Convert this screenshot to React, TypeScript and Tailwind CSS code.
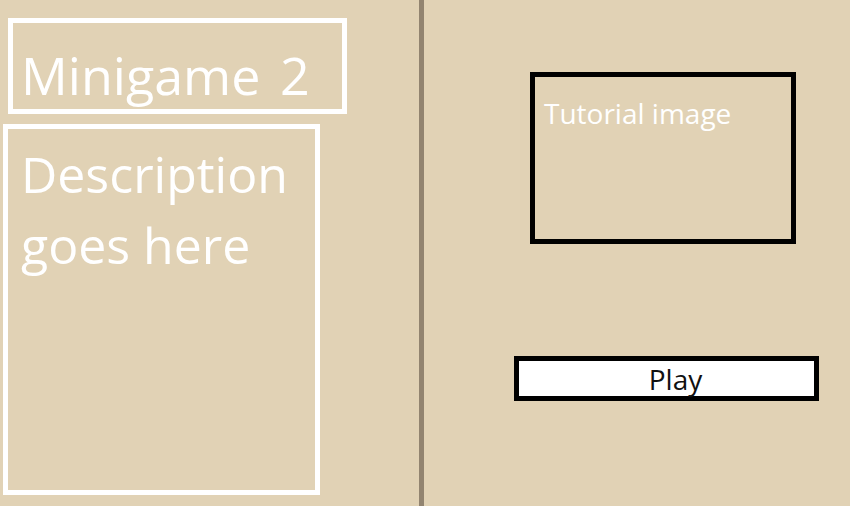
export default function App() {
  return (
    <div
      className="w-[850px] h-[506px] bg-[#e1d2b5] flex overflow-hidden text-white"
      style={{ fontFamily: '"Open Sans", "Noto Sans", sans-serif' }}
    >
      <div className="w-[419px] shrink-0 flex flex-col">
        <div className="ml-[8px] mt-[18px] w-[339px] h-[96px] border-[5px] border-white pl-[8px] pt-[26px] text-[52px] leading-none whitespace-nowrap">
          Minigame <span className="ml-[6px]">2</span>
        </div>
        <div className="ml-[3px] mt-[10px] w-[317px] h-[371px] border-[5px] border-white pl-[13px] pt-[10px] text-[50px] leading-[71px]">
          Description goes here
        </div>
      </div>
      <div className="w-[5px] shrink-0 bg-[#928470]" />
      <div className="flex-1 flex flex-col items-start">
        <div className="ml-[106px] mt-[72px] w-[266px] h-[172px] border-[5px] border-black pl-[9px] pt-[22px] text-[28px] leading-none">
          Tutorial image
        </div>
        <button className="ml-[90px] mt-[112px] w-[305px] h-[45px] border-[5px] border-black bg-white pl-[18px] text-[28px] leading-none text-[#111]">
          Play
        </button>
      </div>
    </div>
  );
}
